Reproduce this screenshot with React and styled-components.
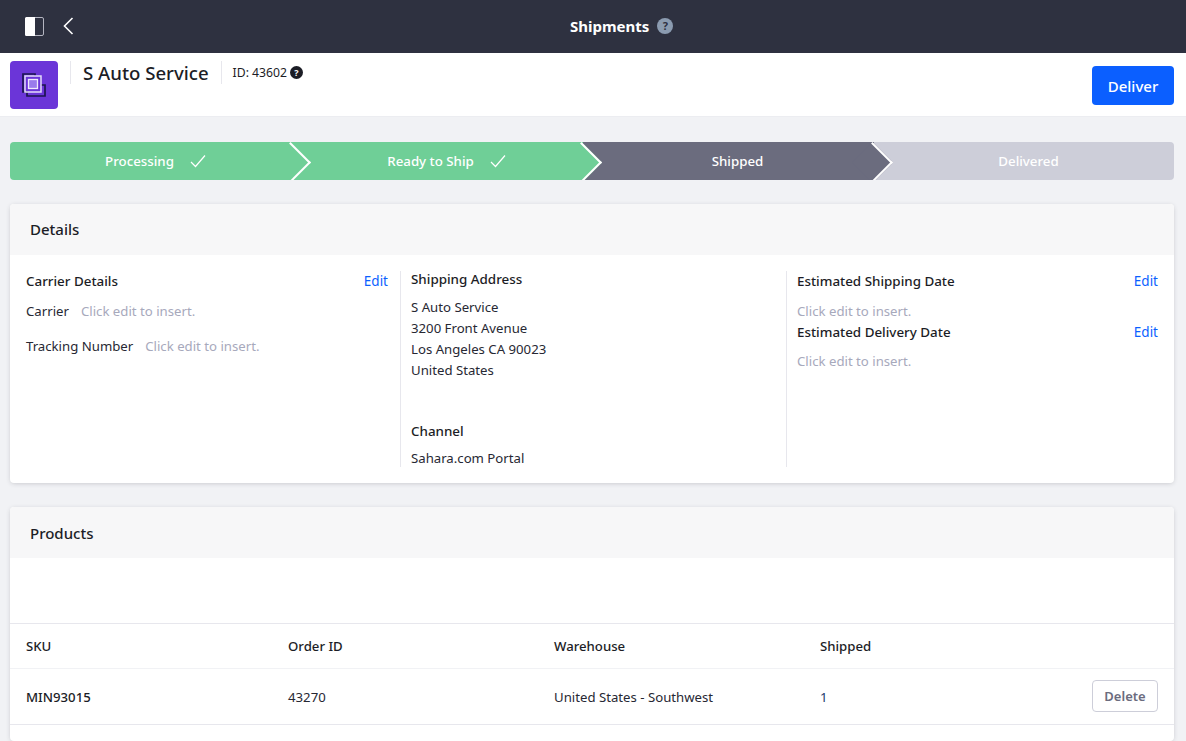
import styled, { createGlobalStyle } from "styled-components";

const GlobalStyle = createGlobalStyle`
  html, body {
    margin: 0;
    padding: 0;
    height: 741px;
    overflow: hidden;
    background: #f1f2f5;
    font-family: "Noto Sans", "Open Sans", sans-serif;
    color: #272833;
  }
  * { box-sizing: border-box; }
`;

const TopBar = styled.header`
  height: 53px;
  background: #2e3140;
  display: grid;
  grid-template-columns: 545px auto;
  align-items: center;
  padding: 0 25px 1px;
`;

const TopLeft = styled.div`
  display: flex;
  align-items: center;
  gap: 19px;
`;

const PageTitle = styled.div`
  display: flex;
  align-items: center;
  gap: 8px;
  margin-top: -1px;
  color: #fff;
  font-size: 15px;
  font-weight: 700;
`;

const HelpDot = styled.span`
  width: ${(p) => p.$dot || 16}px;
  height: ${(p) => p.$dot || 16}px;
  border-radius: 50%;
  background: ${(p) => p.$bg};
  color: ${(p) => p.$color};
  font-size: ${(p) => p.$size || 11}px;
  font-weight: 700;
  display: inline-flex;
  align-items: center;
  justify-content: center;
`;

const SubHeader = styled.div`
  height: 64px;
  background: #fff;
  border-bottom: 1px solid #ecedf1;
  display: flex;
  padding: 8px 12px 0 10px;
`;

const Sticker = styled.div`
  width: 48px;
  height: 48px;
  border-radius: 4px;
  background: #6b35d8;
  display: flex;
  align-items: center;
  justify-content: center;
`;

const NameBlock = styled.div`
  height: 23px;
  margin-left: 12px;
  padding: 0 12px;
  border-left: 1px solid #e7e7ed;
  border-right: 1px solid #e7e7ed;
  font-size: 18.6px;
  font-weight: 500;
  line-height: 24px;
  color: #1c1d26;
`;

const IdBlock = styled.div`
  display: flex;
  align-items: center;
  gap: 3px;
  height: 23px;
  margin-left: 11px;
  font-size: 12.2px;
  color: #1c1d26;
`;

const DeliverButton = styled.button`
  margin: 5px 0 0 auto;
  width: 82px;
  height: 39px;
  border: 0;
  border-radius: 4px;
  background: #0b5fff;
  color: #fff;
  font: 500 15px "Noto Sans", sans-serif;
`;

const Content = styled.main`
  padding: 25px 12px 0 10px;
  display: flex;
  flex-direction: column;
  gap: 24px;
`;

const Stepper = styled.div`
  display: grid;
  grid-template-columns: repeat(4, 1fr);
  height: 38px;
  border-radius: 4px;
  overflow: hidden;
`;

// the fill sits 9.5px left of the cell so the next step starts at the chevron's base
const Step = styled.div`
  position: relative;
  z-index: ${(p) => p.$z};
  color: #fff;
  display: flex;
  align-items: center;
  justify-content: center;
  gap: 16px;
  font-size: 13.3px;
  font-weight: 500;

  &::before {
    content: "";
    position: absolute;
    top: 0;
    bottom: 0;
    left: ${(p) => (p.$first ? 0 : "-9.5px")};
    right: ${(p) => (p.$last ? 0 : "9.5px")};
    background: ${(p) => p.$bg};
  }

  &::after {
    content: ${(p) => (p.$last ? "none" : '""')};
    position: absolute;
    top: 5.5px;
    right: -4px;
    width: 27px;
    height: 27px;
    transform: rotate(45deg);
    background: ${(p) => p.$bg};
    border-top: 2px solid #fff;
    border-right: 2px solid #fff;
  }
`;

const StepLabel = styled.span`
  position: relative;
  z-index: 1;
`;

const StepCheck = styled.svg`
  position: relative;
  z-index: 1;
`;

const Card = styled.section`
  background: #fff;
  border-radius: 4px;
  box-shadow: 0 1px 5px -1px rgba(39, 40, 51, 0.25);
  overflow: hidden;
`;

const CardHead = styled.h2`
  margin: 0;
  height: 51px;
  padding: 0 20px;
  background: #f7f7f8;
  font-size: 15px;
  font-weight: 500;
  line-height: ${(p) => p.$line || 51}px;
  color: #1c1d26;
`;

const DetailsBody = styled.div`
  display: grid;
  grid-template-columns: 390px 386px 1fr;
  grid-template-rows: 196px;
  padding: 16px 16px 16px 0;
  height: 228px;
`;

const Column = styled.div`
  padding: 0 ${(p) => p.$right || 0}px 0 ${(p) => p.$left}px;
  border-left: ${(p) => (p.$divided ? "1px solid #e7e7ed" : "0")};
  font-size: 13.2px;
`;

const TitleRow = styled.div`
  display: flex;
  justify-content: space-between;
  align-items: center;
  height: 21px;
`;

const Heading = styled.div`
  font-size: 13.4px;
  font-weight: 500;
  color: #1c1d26;
  line-height: 21px;
  margin-top: ${(p) => p.$top || 0}px;
`;

const EditLink = styled.a`
  color: #0b5fff;
  font-size: 13.5px;
  margin-top: -1px;
`;

const FieldRow = styled.div`
  display: flex;
  gap: 12px;
  line-height: 21px;
  margin-top: ${(p) => p.$top}px;
`;

const Muted = styled.div`
  color: #a7a9bc;
  font-size: 13.2px;
  line-height: 21px;
  margin-top: ${(p) => p.$top || 0}px;
`;

const AddressLine = styled.div`
  font-size: 13.2px;
  line-height: 21px;
  margin-top: ${(p) => p.$top || 0}px;
`;

const ProductsSpacer = styled.div`
  height: 66px;
  border-bottom: 1px solid #e7e7ed;
`;

const TableTail = styled.div`
  height: 16px;
`;

const Row = styled.div`
  display: grid;
  grid-template-columns: 262px 266px 266px 1fr auto;
  align-items: center;
  height: ${(p) => p.$height}px;
  padding: 0 16px;
  border-bottom: 1px solid ${(p) => (p.$strong ? "#e7e7ed" : "#f1f2f5")};
  font-size: 13.2px;
  font-weight: ${(p) => (p.$head ? 500 : 400)};
  color: ${(p) => (p.$head ? "#1c1d26" : "#272833")};
`;

const Sku = styled.span`
  font-weight: 500;
  color: #1c1d26;
`;

const Count = styled.span`
  color: #1d3a6e;
`;

const DeleteButton = styled.button`
  width: 66px;
  height: 32px;
  margin-top: -1px;
  background: #fff;
  border: 1px solid #cdced9;
  border-radius: 4px;
  color: #6b6c7e;
  font: 600 13px "Noto Sans", sans-serif;
`;

const Check = () => (
  <StepCheck width="16" height="16" viewBox="0 0 16 16" fill="none" stroke="#fff" strokeWidth="1.2">
    <path d="M1 9 L5.5 13.5 L15 2.5" />
  </StepCheck>
);

const steps = [
  { label: "Processing", bg: "#6fcf97", done: true, first: true },
  { label: "Ready to Ship", bg: "#6fcf97", done: true },
  { label: "Shipped", bg: "#6b6c7e" },
  { label: "Delivered", bg: "#cdced9", last: true },
];

export default function App() {
  return (
    <>
      <GlobalStyle />
      <TopBar>
        <TopLeft>
          <svg width="19" height="19" viewBox="0 0 19 19">
            <rect x="0.5" y="0.5" width="18" height="18" rx="1.5" fill="#2e3140" stroke="#b4b5c0" />
            <path d="M0 1.5 A1.5 1.5 0 0 1 1.5 0 H10 V19 H1.5 A1.5 1.5 0 0 1 0 17.5 Z" fill="#fff" />
          </svg>
          <svg width="11" height="18" viewBox="0 0 11 18" fill="none" stroke="#fff" strokeWidth="1.6">
            <path d="M9.5 1 L1.5 9 L9.5 17" />
          </svg>
        </TopLeft>
        <PageTitle>
          Shipments
          <HelpDot $bg="#8b9bb0" $color="#2e3140">?</HelpDot>
        </PageTitle>
      </TopBar>

      <SubHeader>
        <Sticker>
          <svg width="24" height="24" viewBox="0 0 24 24" fill="none">
            <path d="M13 3 V1 H1 V19 H5 V23 H23 V12 H19" stroke="#1c1450" strokeWidth="1.7" />
            <rect x="3" y="3" width="16" height="16" stroke="#e4dcfa" strokeWidth="1.5" />
            <rect x="6.5" y="6.5" width="9" height="9" fill="#9a7bec" stroke="#efeafc" strokeWidth="1.3" />
          </svg>
        </Sticker>
        <NameBlock>S Auto Service</NameBlock>
        <IdBlock>
          ID: 43602
          <HelpDot $bg="#1c1d26" $color="#fff" $size={9} $dot={13}>?</HelpDot>
        </IdBlock>
        <DeliverButton>Deliver</DeliverButton>
      </SubHeader>

      <Content>
        <Stepper>
          {steps.map((s, i) => (
            <Step key={s.label} $bg={s.bg} $z={4 - i} $first={s.first} $last={s.last}>
              <StepLabel>{s.label}</StepLabel>
              {s.done && <Check />}
            </Step>
          ))}
        </Stepper>

        <Card>
          <CardHead>Details</CardHead>
          <DetailsBody>
            <Column $left={16} $right={12}>
              <TitleRow>
                <Heading>Carrier Details</Heading>
                <EditLink>Edit</EditLink>
              </TitleRow>
              <FieldRow $top={9}>
                Carrier <Muted>Click edit to insert.</Muted>
              </FieldRow>
              <FieldRow $top={14}>
                Tracking Number <Muted>Click edit to insert.</Muted>
              </FieldRow>
            </Column>
            <Column $divided $left={10}>
              <Heading $top={-2}>Shipping Address</Heading>
              <AddressLine $top={7}>S Auto Service</AddressLine>
              <AddressLine>3200 Front Avenue</AddressLine>
              <AddressLine>Los Angeles CA 90023</AddressLine>
              <AddressLine>United States</AddressLine>
              <Heading $top={40}>Channel</Heading>
              <AddressLine $top={6}>Sahara.com Portal</AddressLine>
            </Column>
            <Column $divided $left={10}>
              <TitleRow>
                <Heading>Estimated Shipping Date</Heading>
                <EditLink>Edit</EditLink>
              </TitleRow>
              <Muted $top={9}>Click edit to insert.</Muted>
              <TitleRow>
                <Heading>Estimated Delivery Date</Heading>
                <EditLink>Edit</EditLink>
              </TitleRow>
              <Muted $top={8}>Click edit to insert.</Muted>
            </Column>
          </DetailsBody>
        </Card>

        <Card>
          <CardHead $line={52}>Products</CardHead>
          <ProductsSpacer />
          <Row $head $height={45}>
            <span>SKU</span>
            <span>Order ID</span>
            <span>Warehouse</span>
            <span>Shipped</span>
            <span />
          </Row>
          <Row $height={56} $strong>
            <Sku>MIN93015</Sku>
            <span>43270</span>
            <span>United States - Southwest</span>
            <Count>1</Count>
            <DeleteButton>Delete</DeleteButton>
          </Row>
          <TableTail />
        </Card>
      </Content>
    </>
  );
}
